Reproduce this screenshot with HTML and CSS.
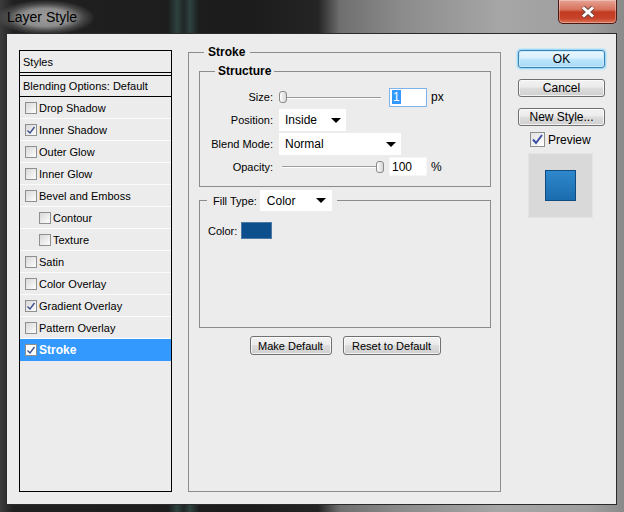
FILE: index.html
```html
<!DOCTYPE html>
<html>
<head>
    <meta charset="UTF-8">
    <title>Layer Style</title>
    <link rel="stylesheet" href="styles.css">
</head>
<body>
<div class="window">
    <div class="titlebar">
        <span class="title">Layer Style</span>
        <div class="close-btn">
            <svg width="18" height="14" viewBox="0 0 18 14">
                <path d="M4 2.5 L14 11.5 M14 2.5 L4 11.5" stroke="#6b4a44" stroke-width="5" fill="none"/>
                <path d="M4 2.5 L14 11.5 M14 2.5 L4 11.5" stroke="#fff" stroke-width="3" fill="none"/>
            </svg>
        </div>
    </div>

    <div class="client">
        <ul class="styles-list">
            <li class="list-head">Styles</li>
            <li class="list-blend">Blending Options: Default</li>
            <li><span class="cb"></span>Drop Shadow</li>
            <li><span class="cb"><svg width="10" height="10" viewBox="0 0 10 10"><path d="M1.5 5.5 L4 8 L8.5 2" stroke="#3b4f8e" stroke-width="1.4" fill="none"/></svg></span>Inner Shadow</li>
            <li><span class="cb"></span>Outer Glow</li>
            <li><span class="cb"></span>Inner Glow</li>
            <li><span class="cb"></span>Bevel and Emboss</li>
            <li class="sub"><span class="cb"></span>Contour</li>
            <li class="sub"><span class="cb"></span>Texture</li>
            <li><span class="cb"></span>Satin</li>
            <li><span class="cb"></span>Color Overlay</li>
            <li><span class="cb"><svg width="10" height="10" viewBox="0 0 10 10"><path d="M1.5 5.5 L4 8 L8.5 2" stroke="#3b4f8e" stroke-width="1.4" fill="none"/></svg></span>Gradient Overlay</li>
            <li><span class="cb"></span>Pattern Overlay</li>
            <li class="active"><span class="cb"><svg width="10" height="10" viewBox="0 0 10 10"><path d="M1.5 5.5 L4 8 L8.5 2" stroke="#3b4f8e" stroke-width="1.4" fill="none"/></svg></span>Stroke</li>
        </ul>

        <fieldset class="panel">
            <legend>Stroke</legend>

            <fieldset class="group structure">
                <legend>Structure</legend>
                <div class="form-grid">
                    <label>Size:</label>
                    <div class="ctl">
                        <div class="slider"><span class="thumb"></span></div>
                        <span class="num focus"><span class="hl">1</span></span>
                        <span class="unit">px</span>
                    </div>

                    <label>Position:</label>
                    <div class="ctl">
                        <span class="dropdown w-position">Inside<i class="arrow"></i></span>
                    </div>

                    <label>Blend Mode:</label>
                    <div class="ctl">
                        <span class="dropdown w-blend">Normal<i class="arrow"></i></span>
                    </div>

                    <label>Opacity:</label>
                    <div class="ctl">
                        <div class="slider end"><span class="thumb"></span></div>
                        <span class="num">100</span>
                        <span class="unit">%</span>
                    </div>
                </div>
            </fieldset>

            <fieldset class="group fill">
                <legend>
                    <span class="legend-row">Fill Type: <span class="dropdown w-fill">Color<i class="arrow"></i></span></span>
                </legend>
                <div class="fill-body">
                    <div class="color-row">Color: <span class="swatch"></span></div>
                </div>
            </fieldset>

            <div class="panel-buttons">
                <button class="btn w-make">Make Default</button>
                <button class="btn w-reset">Reset to Default</button>
            </div>
        </fieldset>

        <div class="side">
            <button class="btn default">OK</button>
            <button class="btn">Cancel</button>
            <button class="btn">New Style...</button>
            <label class="preview-check">
                <span class="cb big"><svg width="13" height="13" viewBox="0 0 13 13"><path d="M2 6.5 L5 10 L11 2" stroke="#3a4ea6" stroke-width="2" fill="none"/></svg></span>Preview
            </label>
            <div class="preview"><div class="preview-swatch"></div></div>
        </div>
    </div>
</div>
</body>
</html>
```

FILE: styles.css
```css
* {
    box-sizing: border-box;
}

html, body {
    margin: 0;
    padding: 0;
}

body {
    width: 624px;
    height: 512px;
    overflow: hidden;
    font: 11px "Liberation Sans", Arial, sans-serif;
    color: #000;
}

/* window frame */
.window {
    height: 512px;
    padding: 0 7px 7px 6px;
    display: flex;
    flex-direction: column;
    background:
        linear-gradient(to right, transparent 168px, rgba(80, 150, 140, .3) 177px, rgba(80, 150, 140, .08) 184px, rgba(80, 150, 140, .3) 190px, transparent 199px),
        linear-gradient(to right, #3c3c3c 0, #202020 14px, #1c1c1c 250px, #242424 318px, #6f6f6f 340px, #8b8b8b 400px, #a6a6a6 500px, #9e9e9e 590px, #8a8a8a 624px);
}

.titlebar {
    height: 33px;
    flex: none;
    display: flex;
    justify-content: space-between;
    align-items: flex-start;
}

/* title text sits on the usual aero glow */
.title {
    margin: 0 0 0 -10px;
    padding: 9px 18px 9px 11px;
    font-size: 14px;
    line-height: 17px;
    color: #000;
    background: radial-gradient(farthest-side, #9a9a9a 0, #8e8e8e 50%, rgba(100, 100, 100, .55) 78%, rgba(60, 60, 60, 0) 100%);
}

.close-btn {
    width: 59px;
    height: 24px;
    border: 1px solid #4b1a12;
    border-top: 0;
    border-radius: 0 0 5px 5px;
    background: linear-gradient(#e7a496 0, #d8705a 42%, #c23a22 52%, #c7432a 80%, #df7658 100%);
    box-shadow: inset 0 0 0 1px rgba(255, 255, 255, .3);
    display: flex;
    align-items: center;
    justify-content: center;
}

/* dialog body */
.client {
    flex: 1;
    display: flex;
    align-items: flex-start;
    background: #ececec;
    border: 1px solid #2b2b2b;
    padding: 11px 0 0 12px;
}

/* styles list */
.styles-list {
    list-style: none;
    margin: 5px 0 0;
    padding: 0;
    width: 153px;
    height: 442px;
    border: 1px solid #000;
    background: #ececec;
    flex: none;
}

.styles-list li {
    height: 22px;
    display: flex;
    align-items: center;
    gap: 2px;
    padding-left: 5px;
    border-bottom: 1px solid #fbfbfb;
}

.styles-list .list-head {
    padding-left: 3px;
    border-bottom-color: #000;
}

.styles-list .list-blend {
    margin-top: 2px;
    padding-left: 3px;
    border-top: 1px solid #000;
    border-bottom-color: #000;
}

.styles-list .sub {
    padding-left: 19px;
}

.styles-list .active {
    background: #3399ff;
    border-bottom-color: #3399ff;
    color: #fff;
    font-weight: bold;
    font-size: 12px;
}

.cb {
    width: 12px;
    height: 12px;
    flex: none;
    border: 1px solid #8e8f8f;
    background: linear-gradient(135deg, #d8d8d8, #fdfdfd);
    display: inline-flex;
    align-items: center;
    justify-content: center;
}

.active .cb {
    background: #fff;
}

.cb.big {
    width: 15px;
    height: 15px;
    background: linear-gradient(135deg, #e2e2e2, #fff);
}

/* stroke panel */
fieldset {
    min-inline-size: 0;
}

.panel {
    margin: 0 0 0 16px;
    width: 313px;
    height: 447px;
    border: 1px solid #8c8c8c;
    padding: 5px 9px 0 10px;
    flex: none;
}

.panel > legend {
    margin-left: 5px;
    padding: 0 5px 0 4px;
    font-weight: bold;
    font-size: 12px;
    line-height: 14px;
}

.group {
    margin: 0;
    padding: 0;
    border: 1px solid #8c8c8c;
}

.structure > legend {
    margin-left: 15px;
    padding: 0 3px;
    font-weight: bold;
    font-size: 12px;
    line-height: 14px;
}

.form-grid {
    display: grid;
    grid-template-columns: 73px auto;
    grid-template-rows: 20px 22px 22px 19px;
    row-gap: 2px;
    column-gap: 6px;
    align-items: center;
    padding: 9px 0 10px;
}

.form-grid label {
    text-align: right;
}

.ctl {
    display: flex;
    align-items: center;
    height: 100%;
}

.slider {
    width: 105px;
    height: 13px;
    display: flex;
    align-items: center;
    background:
        linear-gradient(#9c9c9c, #9c9c9c) 3px 6px / 99px 1px no-repeat,
        linear-gradient(#fff, #fff) 3px 7px / 99px 1px no-repeat;
}

.slider.end {
    justify-content: flex-end;
}

.thumb {
    width: 8px;
    height: 12px;
    border: 1px solid #8a8a8a;
    border-radius: 3px;
    background: linear-gradient(to right, #fdfdfd, #d6d6d6);
}

.num {
    margin-left: 5px;
    width: 38px;
    height: 19px;
    background: #fff;
    border: 1px solid #f6f6f6;
    padding-left: 2px;
    display: flex;
    align-items: center;
    font-size: 12px;
}

.num.focus {
    border-color: #7eb4ea;
}

.hl {
    background: #3399ff;
    color: #fff;
    padding: 0 1px;
    line-height: 14px;
}

.unit {
    margin-left: 4px;
    font-size: 12px;
}

.dropdown {
    height: 22px;
    background: #fff;
    display: flex;
    align-items: center;
    justify-content: space-between;
    padding: 0 5px 0 6px;
    font-size: 12px;
}

.arrow {
    width: 0;
    height: 0;
    border-left: 5px solid transparent;
    border-right: 5px solid transparent;
    border-top: 5px solid #000;
}

.w-position {
    width: 67px;
}

.w-blend {
    width: 122px;
}

.w-fill {
    width: 72px;
    height: 21px;
    padding: 0 6px 0 7px;
}

/* fill type */
.fill {
    margin-top: 3px;
}

.fill > legend {
    margin-left: 7px;
    padding: 0 5px 0 6px;
}

.legend-row {
    display: flex;
    align-items: center;
    gap: 3px;
    height: 21px;
}

.fill-body {
    height: 116px;
    padding: 11px 8px 0;
}

.color-row {
    display: flex;
    align-items: center;
    gap: 4px;
    height: 17px;
}

.swatch {
    width: 31px;
    height: 17px;
    background: #0d4f8c;
    border: 1px solid #4d79a3;
}

.panel-buttons {
    display: flex;
    justify-content: center;
    gap: 11px;
    margin-top: 8px;
}

/* buttons */
.btn {
    height: 19px;
    padding: 0;
    border: 1px solid #707070;
    border-radius: 3px;
    background: linear-gradient(#f2f2f2 0, #ebebeb 45%, #dddddd 50%, #cfcfcf 100%);
    box-shadow: inset 0 0 0 1px rgba(255, 255, 255, .7);
    font: 11px "Liberation Sans", Arial, sans-serif;
    color: #000;
}

.w-make {
    width: 82px;
}

.w-reset {
    width: 98px;
}

.side {
    margin: 5px 0 0 17px;
    width: 87px;
    display: flex;
    flex-direction: column;
    flex: none;
}

.side .btn {
    height: 18px;
    font-size: 12px;
    margin-bottom: 11px;
}

.side .btn.default {
    border-color: #3c7fb1;
    background: linear-gradient(#eaf6fd 0, #d9f0fc 45%, #bee6fd 50%, #a7d9f5 100%);
    box-shadow: 0 0 2px 1px #7fd6ff, inset 0 0 0 1px #c8ecff;
}

.preview-check {
    display: flex;
    align-items: center;
    gap: 3px;
    margin: -5px 0 0 12px;
    height: 15px;
    font-size: 12px;
}

.preview {
    width: 65px;
    height: 65px;
    margin: 6px 0 0 10px;
    background: #d9d9d9;
    border: 1px solid #e4e4e4;
    display: flex;
    align-items: center;
    justify-content: center;
}

.preview-swatch {
    width: 31px;
    height: 31px;
    border: 1px solid #0f4a80;
    background: linear-gradient(#2f88cc, #1a6cae);
}
```
